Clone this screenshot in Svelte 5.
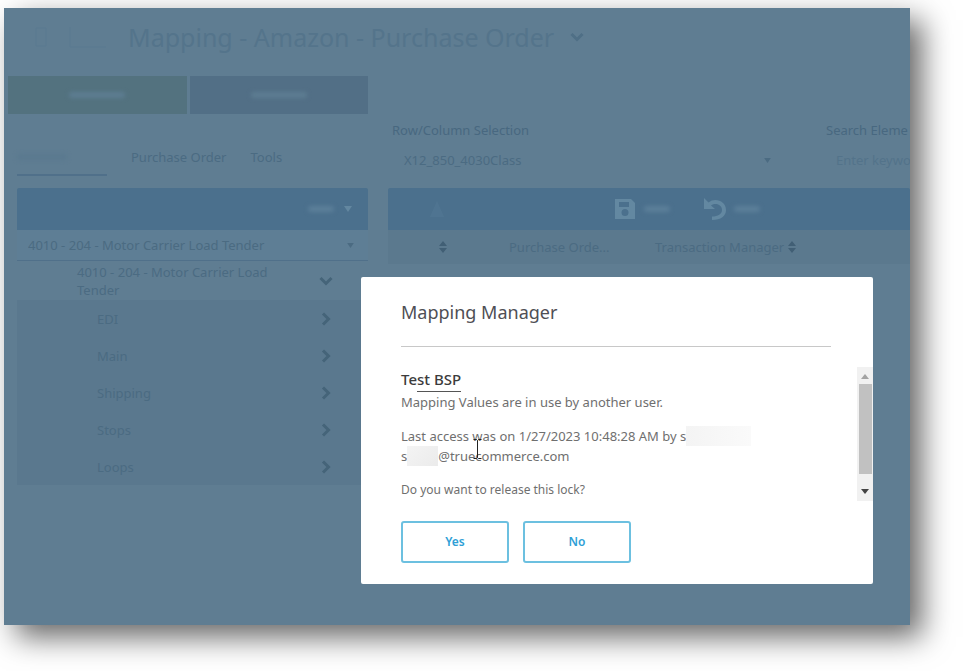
<script lang="ts">
  let category = $state("4010 - 204 - Motor Carrier Load Tender");
  let mappingClass = $state("X12_850_4030Class");
  let open = $state(true);

  const segments = ["EDI", "Main", "Shipping", "Stops", "Loops"];
</script>

{#snippet chevron(down: boolean)}
  <svg class="chevron" class:down viewBox="0 0 14 14" aria-hidden="true">
    <path d="M4 1.5 L9.5 7 L4 12.5" />
  </svg>
{/snippet}

{#snippet sorter()}
  <svg class="sorter" viewBox="0 0 8 12" aria-hidden="true">
    <path d="M4 0 L8 5 H0 Z M4 12 L0 7 H8 Z" />
  </svg>
{/snippet}

<div class="page">
  <div class="window">
    <header>
      <button type="button" class="nav" aria-label="Back">
        <svg viewBox="0 0 24 24"><path d="M8 3 H18 V21 H8 Z" /></svg>
      </button>
      <button type="button" class="nav wide" aria-label="Menu">
        <svg viewBox="0 0 40 24"><path d="M2 2 V22 H38" /></svg>
      </button>
      <h1>Mapping - Amazon - Purchase Order</h1>
      {@render chevron(true)}
    </header>

    <div class="columns">
      <aside>
        <div class="modes">
          <button type="button" class="mode green" aria-label="Mapping mode"><span class="smudge"></span></button>
          <button type="button" class="mode" aria-label="Other mode"><span class="smudge"></span></button>
        </div>

        <nav class="tabs">
          <a href="#source" class="current" aria-label="Source"><span class="smudge dark"></span></a>
          <a href="#order">Purchase Order</a>
          <a href="#tools">Tools</a>
        </nav>

        <div class="tree">
          <div class="bar tree-bar">
            <button type="button" aria-label="Options">
              <span class="smudge short"></span>
              <svg class="caret" viewBox="0 0 8 6"><path d="M0 0 H8 L4 6 Z" /></svg>
            </button>
          </div>
          <div class="picker">
            <select bind:value={category} aria-label="Document">
              <option>4010 - 204 - Motor Carrier Load Tender</option>
            </select>
            <svg class="caret" viewBox="0 0 8 6"><path d="M0 0 H8 L4 6 Z" /></svg>
          </div>
          <button type="button" class="root">
            <span>4010 - 204 - Motor Carrier Load Tender</span>
            {@render chevron(true)}
          </button>
          <ul>
            {#each segments as segment}
              <li>
                <button type="button">
                  <span>{segment}</span>
                  {@render chevron(false)}
                </button>
              </li>
            {/each}
          </ul>
        </div>
      </aside>

      <main>
        <div class="filters">
          <div class="field">
            <label for="mapping-class">Row/Column Selection</label>
            <div class="picker">
              <select id="mapping-class" bind:value={mappingClass}>
                <option>X12_850_4030Class</option>
              </select>
              <svg class="caret" viewBox="0 0 8 6"><path d="M0 0 H8 L4 6 Z" /></svg>
            </div>
          </div>
          <div class="field search">
            <label for="search">Search Eleme</label>
            <input id="search" type="text" placeholder="Enter keywo" />
          </div>
        </div>

        <div class="bar toolbar">
          <button type="button" class="tool add" aria-label="Add">
            <svg viewBox="0 0 22 22"><path d="M11 3 L18 19 H4 Z" /></svg>
          </button>
          <button type="button" class="tool" aria-label="Save">
            <svg viewBox="0 0 22 22">
              <path fill-rule="evenodd" d="M1 1 H17 L21 5 V21 H1 Z M5 4 V9 H15 V4 Z M11 11 A3.5 3.5 0 1 0 11 18 A3.5 3.5 0 1 0 11 11 Z" />
            </svg>
            <span class="smudge short"></span>
          </button>
          <button type="button" class="tool" aria-label="Undo">
            <svg viewBox="0 0 22 22">
              <path d="M0 0 V11 H11 L7 7.500 C12 4 18 7 18 12 C18 16 14 18.500 8 18.500 V22 C17 22 22 18 22 12 C22 3 11 -1 4.500 4.500 Z" />
            </svg>
            <span class="smudge short"></span>
          </button>
        </div>

        <table>
          <thead>
            <tr>
              <th class="col-sort" aria-label="Sort">{@render sorter()}</th>
              <th class="col-order">Purchase Orde...</th>
              <th>Transaction Manager {@render sorter()}</th>
            </tr>
          </thead>
        </table>
      </main>
    </div>

    {#if open}
      <div class="overlay">
        <div class="dialog" role="dialog" aria-modal="true" aria-labelledby="dialog-title">
          <h2 id="dialog-title">Mapping Manager</h2>
          <div class="scroller">
            <div class="message">
              <h3>Te<span>st BSP</span></h3>
              <p>Mapping Values are in use by another user.</p>
              <p class="access">
                Last access was on 1/27/2023 10:48:28 AM by s<span class="redacted long"></span><br />
                s<span class="redacted"></span>@truecommerce.com
                <svg class="ibeam" viewBox="0 0 9 22" aria-hidden="true">
                  <path d="M0.500 1.500 H3.500 L4.500 2.500 L5.500 1.500 H8.500 M4.500 2.500 V19.500 M0.500 20.500 H3.500 L4.500 19.500 L5.500 20.500 H8.500" />
                </svg>
              </p>
              <p class="question">Do you want to release this lock?</p>
            </div>
            <div class="scrollbar" aria-hidden="true">
              <svg viewBox="0 0 8 5"><path d="M4 0 L8 5 H0 Z" /></svg>
              <div class="thumb"></div>
              <svg class="end" viewBox="0 0 8 5"><path d="M0 0 H8 L4 5 Z" /></svg>
            </div>
          </div>
          <div class="actions">
            <button type="button" onclick={() => (open = false)}>Yes</button>
            <button type="button" onclick={() => (open = false)}>No</button>
          </div>
        </div>
      </div>
    {/if}
  </div>
</div>

<style>
  .page {
    display: flex;
    flex-direction: column;
    box-sizing: border-box;
    min-height: 100vh;
    padding: 8px 53px 46px 4px;
    overflow: hidden;
    background: #fff;
  }

  .window {
    --ink: #4b6b82;
    --faint: #6388a1;
    position: relative;
    flex: 1;
    box-sizing: border-box;
    padding: 11px 0 0 4px;
    overflow: hidden;
    background: #5f7d92;
    box-shadow: 12px 12px 28px rgba(0, 0, 0, 0.6);
    color: var(--ink);
    font-family: "Noto Sans", "Open Sans", sans-serif;
    font-size: 13px;
    line-height: 18px;
  }

  button,
  select,
  input {
    font: inherit;
    color: inherit;
    background: none;
    border: none;
    padding: 0;
    text-align: left;
  }

  button {
    cursor: pointer;
  }

  header {
    display: flex;
    align-items: center;
    height: 36px;
    padding-left: 20px;
  }

  .nav {
    width: 24px;
    height: 24px;
    margin-right: 16px;
  }

  .nav.wide {
    width: 40px;
    margin-right: 20px;
  }

  .nav svg {
    width: 100%;
    height: 100%;
    fill: none;
    stroke: #5b7a90;
    stroke-width: 1;
  }

  h1 {
    margin: 0 16px 0 0;
    color: #54748b;
    font-size: 25px;
    font-weight: 400;
    line-height: 36px;
    white-space: nowrap;
  }

  .columns {
    display: flex;
    gap: 20px;
    margin-top: 21px;
  }

  aside {
    flex: none;
    width: 360px;
  }

  .modes {
    display: flex;
    gap: 3px;
    height: 38px;
  }

  .mode {
    display: flex;
    flex: 1;
    align-items: center;
    justify-content: center;
    background: #526f86;
  }

  .mode.green {
    background: #53727f;
  }

  .smudge {
    width: 56px;
    height: 6px;
    border-radius: 3px;
    background: #5d7d92;
    filter: blur(2px);
  }

  .smudge.short {
    width: 26px;
    background: #5c7f99;
  }

  .smudge.dark {
    display: block;
    width: 50px;
    margin: 6px 0;
    background: #5a798f;
  }

  .tabs {
    display: flex;
    gap: 24px;
    margin: 34px 0 12px 9px;
  }

  .tabs a {
    height: 26px;
    border-bottom: 2px solid transparent;
    color: inherit;
    text-decoration: none;
  }

  .tabs .current {
    width: 90px;
    border-color: #50708a;
  }

  .tree {
    margin-left: 9px;
  }

  .bar {
    display: flex;
    align-items: center;
    height: 42px;
    border-radius: 2px 2px 0 0;
    background: #4b708d;
  }

  .tree-bar {
    justify-content: flex-end;
  }

  .tree-bar button {
    display: flex;
    align-items: center;
    gap: 10px;
    margin-right: 16px;
  }

  .caret {
    flex: none;
    width: 8px;
    height: 6px;
    fill: #6387a0;
  }

  .picker {
    display: flex;
    align-items: center;
    height: 30px;
    padding: 0 14px 0 11px;
    border-bottom: 1px solid #50708a;
    background: #5e7e95;
  }

  .picker .caret {
    width: 7px;
    height: 5px;
    fill: var(--ink);
  }

  .picker select {
    flex: 1;
    min-width: 0;
    appearance: none;
    outline: none;
  }

  .root {
    display: flex;
    align-items: center;
    justify-content: space-between;
    width: 345px;
    height: 39px;
    padding: 0 29px 0 60px;
  }

  .root span {
    width: 208px;
  }

  ul {
    width: 345px;
    margin: 0;
    padding: 0;
    list-style: none;
    background: #5a788e;
  }

  li button {
    display: flex;
    align-items: center;
    justify-content: space-between;
    width: 100%;
    height: 37px;
    padding: 0 29px 0 80px;
  }

  .chevron {
    flex: none;
    width: 14px;
    height: 14px;
    fill: none;
    stroke: #456479;
    stroke-width: 3;
  }

  .chevron.down {
    transform: rotate(90deg);
  }

  header .chevron {
    stroke: #4f6f86;
  }

  main {
    flex: 1;
    min-width: 0;
    padding-top: 45px;
  }

  .filters {
    display: flex;
    gap: 41px;
    margin: 0 0 7px 4px;
  }

  .field {
    flex: none;
    width: 393px;
  }

  .field.search {
    flex: 1;
    width: auto;
    min-width: 0;
  }

  .field label {
    display: block;
    color: #486880;
    white-space: nowrap;
  }

  .field .picker {
    height: 42px;
    padding: 0 14px 0 12px;
    border: none;
    background: none;
  }

  .search input {
    box-sizing: border-box;
    width: 100%;
    height: 42px;
    padding: 0 0 0 10px;
    outline: none;
  }

  .search input::placeholder {
    color: #53738a;
    opacity: 1;
  }

  .tool {
    display: flex;
    align-items: center;
    gap: 8px;
    margin-right: 34px;
  }

  .tool.add {
    margin: 0 166px 0 38px;
    opacity: 0.2;
  }

  .tool svg {
    width: 22px;
    height: 22px;
    fill: var(--faint);
  }

  table {
    width: 100%;
    border-collapse: collapse;
    background: #5b798e;
  }

  th {
    height: 34px;
    padding: 0;
    font-weight: 400;
    text-align: left;
    white-space: nowrap;
  }

  .col-sort {
    width: 70px;
    padding-left: 51px;
  }

  .col-order {
    width: 146px;
  }

  .sorter {
    width: 8px;
    height: 12px;
    fill: #415f75;
    vertical-align: -1px;
  }

  .overlay {
    position: absolute;
    inset: 0;
    display: flex;
    align-items: flex-end;
    justify-content: flex-end;
    padding: 0 37px 41px 0;
  }

  .dialog {
    box-sizing: border-box;
    width: 100%;
    max-width: 512px;
    padding: 20px 0 21px 40px;
    border-radius: 2px;
    background: #fff;
    color: #6f6f6f;
  }

  h2 {
    margin: 0 42px 20px 0;
    padding-bottom: 19px;
    border-bottom: 1px solid #c8c8c8;
    color: #4f4f55;
    font-size: 18px;
    font-weight: 400;
    line-height: 30px;
  }

  .scroller {
    display: flex;
    justify-content: space-between;
    height: 134px;
  }

  h3 {
    margin: 0;
    color: #3c3c3c;
    font-size: 15px;
    font-weight: 500;
    line-height: 24px;
  }

  h3 span {
    display: inline-block;
    border-bottom: 1px solid #555;
  }

  .message p {
    margin: 0 0 14px;
    line-height: 20px;
  }

  .message .access {
    position: relative;
  }

  .message .question {
    font-size: 12px;
  }

  .redacted {
    display: inline-block;
    width: 31px;
    height: 20px;
    background: linear-gradient(135deg, #f4f4f4, #ebebeb);
    vertical-align: top;
  }

  .redacted.long {
    width: 65px;
    background: linear-gradient(90deg, #f4f4f4, #fafafa);
  }

  .ibeam {
    position: absolute;
    top: 12px;
    left: 72px;
    width: 9px;
    height: 22px;
    fill: none;
    stroke: #222;
    stroke-width: 1;
  }

  .scrollbar {
    display: flex;
    flex-direction: column;
    align-items: center;
    box-sizing: border-box;
    width: 16px;
    padding: 7px 0;
    background: #f1f1f1;
  }

  .scrollbar svg {
    width: 8px;
    height: 5px;
    fill: #a3a3a3;
  }

  .scrollbar .end {
    margin-top: auto;
    fill: #444;
  }

  .thumb {
    width: 13px;
    height: 90px;
    margin-top: 5px;
    background: #c1c1c1;
  }

  .actions {
    display: flex;
    gap: 14px;
    margin-top: 20px;
  }

  .actions button {
    box-sizing: border-box;
    width: 108px;
    height: 42px;
    border: 2px solid #6cc0e0;
    border-radius: 3px;
    color: #2f9fd6;
    font-size: 12px;
    font-weight: 600;
    text-align: center;
  }
</style>
